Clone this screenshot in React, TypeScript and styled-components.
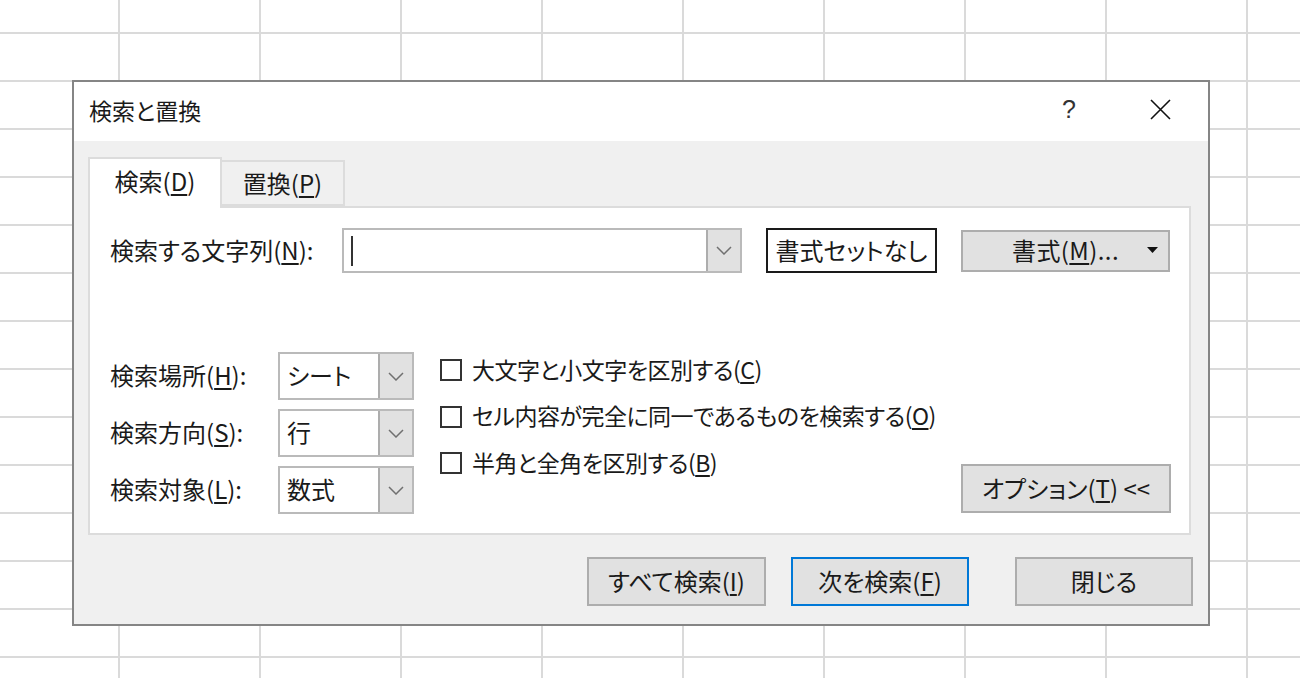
import styled, { createGlobalStyle } from "styled-components";

const GlobalStyle = createGlobalStyle`
  html, body {
    margin: 0;
    padding: 0;
  }
  body {
    font-family: "Noto Sans CJK JP", "Noto Sans", sans-serif;
    color: #1a1a1a;
  }
`;

const Sheet = styled.div`
  width: 1300px;
  height: 678px;
  box-sizing: border-box;
  padding: 80px 0 0 72px;
  overflow: hidden;
  background-color: #fff;
  background-image: linear-gradient(to right, #dadada 2px, transparent 2px),
    linear-gradient(to bottom, #dadada 2px, transparent 2px);
  background-size: 141px 100%, 100% 48px;
  background-position: 118px 0, 0 32px;
`;

const Dialog = styled.div`
  width: 1138px;
  height: 546px;
  box-sizing: border-box;
  display: flex;
  flex-direction: column;
  border: 2px solid #858585;
  background: #f0f0f0;
  font-size: 24px;
  font-feature-settings: "palt";
`;

const TitleBar = styled.div`
  display: flex;
  align-items: center;
  height: 59px;
  box-sizing: border-box;
  padding: 0 37px 4px 15px;
  background: #fff;
`;

const Title = styled.div`
  font-size: 23px;
  color: #1a1a1a;
`;

const TitleControls = styled.div`
  display: flex;
  align-items: center;
  gap: 74px;
  margin-left: auto;
`;

const HelpMark = styled.span`
  font-family: "Liberation Sans", sans-serif;
  font-size: 25px;
  color: #333;
`;

const Body = styled.div`
  flex: 1;
  display: flex;
  flex-direction: column;
  padding: 16px 17px 18px 14px;
`;

const TabStrip = styled.div`
  display: flex;
  align-items: flex-end;
  height: 49px;
`;

const Tab = styled.div<{ $active?: boolean }>`
  display: flex;
  align-items: center;
  justify-content: center;
  box-sizing: border-box;
  width: ${(p) => (p.$active ? "134px" : "123px")};
  height: ${(p) => (p.$active ? "51px" : "46px")};
  margin-bottom: ${(p) => (p.$active ? "-2px" : "0")};
  padding: ${(p) => (p.$active ? "0 0 6px" : "0 0 2px")};
  border: 2px solid #dcdcdc;
  border-bottom: ${(p) => (p.$active ? "none" : "2px solid #dcdcdc")};
  border-left: ${(p) => (p.$active ? "2px solid #dcdcdc" : "none")};
  background: ${(p) => (p.$active ? "#fff" : "#f0f0f0")};
  position: relative;
  z-index: ${(p) => (p.$active ? 1 : 0)};
`;

const Panel = styled.div`
  height: 329px;
  box-sizing: border-box;
  display: flex;
  flex-direction: column;
  padding: 20px 18px 20px 20px;
  border: 2px solid #dcdcdc;
  background: #fff;
`;

const SearchRow = styled.div`
  display: flex;
  align-items: center;
  height: 45px;
`;

const FieldLabel = styled.div<{ $width: number }>`
  width: ${(p) => p.$width}px;
  flex-shrink: 0;
  padding-bottom: 3px;
  white-space: nowrap;
`;

const Key = styled.span`
  text-decoration: underline;
  text-underline-offset: 3px;
  text-decoration-thickness: 1.5px;
`;

const Combo = styled.div<{ $width: number; $height: number }>`
  display: flex;
  box-sizing: border-box;
  width: ${(p) => p.$width}px;
  height: ${(p) => p.$height}px;
  border: 2px solid #bababa;
  background: #fff;
`;

const ComboValue = styled.div`
  flex: 1;
  display: flex;
  align-items: center;
  padding: 0 0 3px 7px;
  white-space: nowrap;
`;

const Caret = styled.div`
  width: 2px;
  height: 30px;
  margin-top: 3px;
  background: #333;
`;

const ComboArrow = styled.div`
  display: flex;
  align-items: center;
  justify-content: center;
  width: 32px;
  border-left: 2px solid #adadad;
  background: #e1e1e1;
`;

const FormatNone = styled.div`
  display: flex;
  align-items: center;
  justify-content: center;
  box-sizing: border-box;
  width: 171px;
  height: 45px;
  margin-left: 24px;
  padding-bottom: 3px;
  border: 2px solid #1a1a1a;
  background: #fff;
`;

const PushButton = styled.div<{ $width: number; $default?: boolean }>`
  display: flex;
  align-items: center;
  justify-content: center;
  flex-shrink: 0;
  box-sizing: border-box;
  width: ${(p) => p.$width}px;
  height: 49px;
  padding-bottom: 3px;
  border: 2px solid ${(p) => (p.$default ? "#0078d7" : "#adadad")};
  background: #e1e1e1;
  white-space: nowrap;
`;

const FormatButton = styled(PushButton)`
  position: relative;
  height: 42px;
  margin-left: 24px;
  letter-spacing: 0.4px;
`;

const DropMark = styled.svg`
  position: absolute;
  right: 10px;
  top: 50%;
  margin-top: -4px;
`;

const Lower = styled.div`
  display: flex;
  align-items: flex-end;
  margin-top: 79px;
`;

const SelectGrid = styled.div`
  display: grid;
  grid-template-columns: 168px 136px;
  grid-auto-rows: 48px;
  row-gap: 9px;
  align-items: center;
`;

const CheckList = styled.div`
  align-self: flex-start;
  display: flex;
  flex-direction: column;
  margin: -5px 0 0 26px;
  font-size: 23px;
  letter-spacing: -0.5px;
`;

const CheckRow = styled.div`
  display: flex;
  align-items: center;
  gap: 10px;
  height: 46.5px;
  white-space: nowrap;
`;

const CheckText = styled.span`
  padding-bottom: 3px;
`;

const CheckBox = styled.div`
  width: 22px;
  height: 22px;
  box-sizing: border-box;
  border: 2px solid #333;
  background: #fff;
`;

const OptionsButton = styled(PushButton)`
  margin: 0 0 1px auto;
`;

const ButtonRow = styled.div`
  display: flex;
  justify-content: flex-end;
  margin: 22px -2px 0 0;
`;

const Chevron = () => (
  <svg width="16" height="9" viewBox="0 0 16 9">
    <path d="M1 1 L8 8 L15 1" fill="none" stroke="#707070" strokeWidth="1.5" />
  </svg>
);

const selects = [
  { label: "検索場所", key: "H", value: "シート" },
  { label: "検索方向", key: "S", value: "行" },
  { label: "検索対象", key: "L", value: "数式" },
];

const checks = [
  { text: "大文字と小文字を区別する", key: "C" },
  { text: "セル内容が完全に同一であるものを検索する", key: "O" },
  { text: "半角と全角を区別する", key: "B" },
];

export default function App() {
  return (
    <>
      <GlobalStyle />
      <Sheet>
        <Dialog>
          <TitleBar>
            <Title>検索と置換</Title>
            <TitleControls>
              <HelpMark>?</HelpMark>
              <svg width="21" height="21" viewBox="0 0 21 21">
                <path d="M1 1 L20 20 M20 1 L1 20" stroke="#111" strokeWidth="1.6" />
              </svg>
            </TitleControls>
          </TitleBar>
          <Body>
            <TabStrip>
              <Tab $active>
                検索(<Key>D</Key>)
              </Tab>
              <Tab>
                置換(<Key>P</Key>)
              </Tab>
            </TabStrip>
            <Panel>
              <SearchRow>
                <FieldLabel $width={232}>
                  検索する文字列(<Key>N</Key>):
                </FieldLabel>
                <Combo $width={400} $height={45}>
                  <ComboValue>
                    <Caret />
                  </ComboValue>
                  <ComboArrow>
                    <Chevron />
                  </ComboArrow>
                </Combo>
                <FormatNone>書式セットなし</FormatNone>
                <FormatButton $width={209}>
                  書式(<Key>M</Key>)...
                  <DropMark width="11" height="6" viewBox="0 0 11 6">
                    <path d="M0 0 H11 L5.5 6 Z" fill="#111" />
                  </DropMark>
                </FormatButton>
              </SearchRow>
              <Lower>
                <SelectGrid>
                  {selects.map((s) => [
                    <FieldLabel $width={168} key={s.key + "l"}>
                      {s.label}(<Key>{s.key}</Key>):
                    </FieldLabel>,
                    <Combo $width={136} $height={48} key={s.key + "c"}>
                      <ComboValue>{s.value}</ComboValue>
                      <ComboArrow>
                        <Chevron />
                      </ComboArrow>
                    </Combo>,
                  ])}
                </SelectGrid>
                <CheckList>
                  {checks.map((c) => (
                    <CheckRow key={c.key}>
                      <CheckBox />
                      <CheckText>
                        {c.text}(<Key>{c.key}</Key>)
                      </CheckText>
                    </CheckRow>
                  ))}
                </CheckList>
                <OptionsButton $width={210}>
                  オプション(<Key>T</Key>) &lt;&lt;
                </OptionsButton>
              </Lower>
            </Panel>
            <ButtonRow>
              <PushButton $width={179}>
                すべて検索(<Key>I</Key>)
              </PushButton>
              <PushButton $width={178} $default style={{ marginLeft: 25 }}>
                次を検索(<Key>F</Key>)
              </PushButton>
              <PushButton $width={178} style={{ marginLeft: 46 }}>
                閉じる
              </PushButton>
            </ButtonRow>
          </Body>
        </Dialog>
      </Sheet>
    </>
  );
}
